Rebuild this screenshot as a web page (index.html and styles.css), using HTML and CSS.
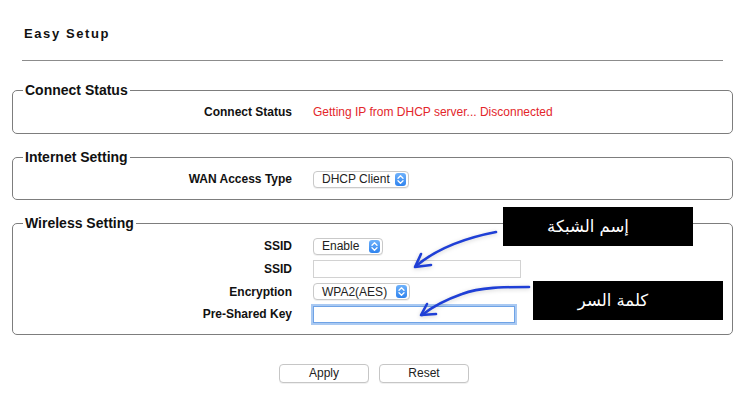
FILE: index.html
```html
<!DOCTYPE html>
<html lang="en">
<head>
<meta charset="utf-8">
<title>Easy Setup</title>
<link rel="stylesheet" href="styles.css">
</head>
<body>
<div class="page">
  <h1 class="title">Easy Setup</h1>
  <hr class="rule">

  <fieldset class="group">
    <legend>Connect Status</legend>
    <div class="row">
      <span class="label">Connect Status</span>
      <span class="status">Getting IP from DHCP server... Disconnected</span>
    </div>
  </fieldset>

  <fieldset class="group internet">
    <legend>Internet Setting</legend>
    <div class="row">
      <span class="label">WAN Access Type</span>
      <span class="select w96">DHCP Client<span class="stepper"><svg width="11" height="13" viewBox="0 0 11 13"><path d="M3 5.2 L5.5 2.8 L8 5.2 M3 7.8 L5.5 10.2 L8 7.8" fill="none" stroke="#fff" stroke-width="1.3" stroke-linecap="round" stroke-linejoin="round"/></svg></span></span>
    </div>
  </fieldset>

  <fieldset class="group wireless">
    <legend>Wireless Setting</legend>
    <div class="row">
      <span class="label">SSID</span>
      <span class="select w70">Enable<span class="stepper"><svg width="11" height="13" viewBox="0 0 11 13"><path d="M3 5.2 L5.5 2.8 L8 5.2 M3 7.8 L5.5 10.2 L8 7.8" fill="none" stroke="#fff" stroke-width="1.3" stroke-linecap="round" stroke-linejoin="round"/></svg></span></span>
    </div>
    <div class="row">
      <span class="label">SSID</span>
      <span class="input w208"></span>
    </div>
    <div class="row">
      <span class="label">Encryption</span>
      <span class="select w97">WPA2(AES)<span class="stepper"><svg width="11" height="13" viewBox="0 0 11 13"><path d="M3 5.2 L5.5 2.8 L8 5.2 M3 7.8 L5.5 10.2 L8 7.8" fill="none" stroke="#fff" stroke-width="1.3" stroke-linecap="round" stroke-linejoin="round"/></svg></span></span>
    </div>
    <div class="row">
      <span class="label">Pre-Shared Key</span>
      <span class="input focus w202"></span>
    </div>
  </fieldset>

  <div class="buttons">
    <button class="btn">Apply</button>
    <button class="btn">Reset</button>
  </div>

  <div class="note note-ssid" dir="rtl">إسم الشبكة</div>
  <div class="note note-key" dir="rtl">كلمة السر</div>

  <svg class="arrows" width="748" height="416" viewBox="0 0 748 416">
    <g fill="none" stroke="#1f3fd6" stroke-width="2.6" stroke-linecap="round" stroke-linejoin="round">
      <path d="M496 232 C 470 237 440 246 416 266"/>
      <path d="M421 254 L415 267 L431 265"/>
      <path d="M529 287 C 505 287 480 287 462 294 C 445 300 432 307 422 315"/>
      <path d="M427 304 L421 315 L436 314"/>
    </g>
  </svg>
</div>
</body>
</html>
```

FILE: styles.css
```css
html, body {
  margin: 0;
  padding: 0;
  background: #fff;
}

.page {
  position: relative;
  width: 748px;
  height: 416px;
  font-family: "Liberation Sans", Arial, sans-serif;
  color: #000;
  overflow: hidden;
}

.title {
  margin: 0;
  padding: 26px 0 0 24px;
  font-size: 13px;
  line-height: 15px;
  font-weight: bold;
  letter-spacing: 1.6px;
  color: #111;
}

.rule {
  margin: 19px 25px 0 22px;
  border: 0;
  border-top: 1px solid #8c8c8c;
  height: 0;
}

.group {
  margin: 21px 0 0 12px;
  width: 721px;
  box-sizing: border-box;
  border: 1px solid #7d7d7d;
  border-radius: 5px;
  padding: 3px 10px 10px;
}

.group + .group {
  margin-top: 15px;
}

.group legend {
  padding: 0 2px;
  font-size: 14px;
  line-height: 16px;
  font-weight: bold;
  color: #111;
}

.internet {
  padding-bottom: 9px;
}

.row {
  display: grid;
  grid-template-columns: 269px auto;
  column-gap: 21px;
  align-items: center;
  height: 22px;
}

.wireless {
  padding-top: 4px;
  padding-bottom: 8px;
}

.wireless .row {
  height: 22.67px;
}

.label {
  text-align: right;
  font-size: 12px;
  font-weight: bold;
  color: #111;
}

.status {
  font-size: 12px;
  color: #e3262b;
}

.select {
  position: relative;
  display: flex;
  align-items: center;
  box-sizing: border-box;
  height: 17px;
  padding-left: 8px;
  border: 1px solid #c9c9c9;
  border-radius: 4px;
  background: #fff;
  font-family: "Liberation Sans", Arial, sans-serif;
  font-size: 12px;
  color: #222;
  box-shadow: 0 1px 0 rgba(0,0,0,0.06);
}

.stepper {
  position: absolute;
  right: 2px;
  top: 1px;
  width: 11px;
  height: 13px;
  border-radius: 3px;
  background: linear-gradient(#6fb2fb, #2f83ee);
  display: flex;
}

.w96 { width: 96px; }
.w70 { width: 70px; }
.w97 { width: 97px; }
.w208 { width: 208px; }
.w202 { width: 202px; }

.input {
  display: block;
  box-sizing: border-box;
  height: 18px;
  border: 1px solid #d2d2d2;
  background: #fff;
}

.input.focus {
  border: 1px solid #6fa3e6;
  box-shadow: 0 0 0 2px #a9c9f2;
  height: 17px;
}

.buttons {
  display: flex;
  justify-content: center;
  gap: 10px;
  margin-top: 29px;
}

.btn {
  width: 90px;
  height: 19px;
  padding: 0;
  border: 1px solid #c6c6c6;
  border-radius: 4px;
  background: #fff;
  font-family: "Liberation Sans", Arial, sans-serif;
  font-size: 12px;
  color: #222;
  box-shadow: 0 1px 0 rgba(0,0,0,0.06);
}

.note {
  position: absolute;
  width: 190px;
  height: 39px;
  background: #000;
  color: #fff;
  font-family: "DejaVu Sans", sans-serif;
  font-size: 16.5px;
  display: flex;
  align-items: center;
  justify-content: center;
  box-sizing: border-box;
}

.note-ssid {
  left: 503px;
  top: 207px;
  padding-right: 20px;
}

.note-key {
  left: 533px;
  top: 281px;
  padding-right: 30px;
}

.arrows {
  position: absolute;
  left: 0;
  top: 0;
  pointer-events: none;
  filter: drop-shadow(0 1px 2px rgba(0,0,0,0.18));
}
```
